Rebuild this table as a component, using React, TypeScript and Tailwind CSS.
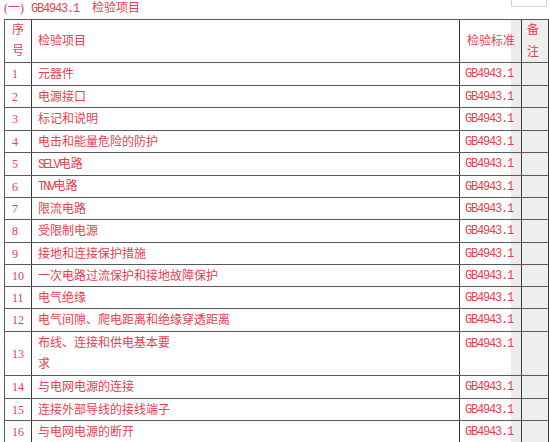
const RED = 'text-[#e8404f]'

type Row = { no: string; item: React.ReactNode; h: string; tall?: boolean }

const Mono = ({ children }: { children: React.ReactNode }) => (
  <span className="font-['Liberation_Mono',monospace] tracking-[-1.2px]">{children}</span>
)

const Narrow = ({ children }: { children: React.ReactNode }) => (
  <span className="font-['Liberation_Mono',monospace] tracking-[-2px]">{children}</span>
)

const rows: Row[] = [
  { no: '1', item: '元器件', h: 'h-[23px]' },
  { no: '2', item: '电源接口', h: 'h-[22px]' },
  { no: '3', item: '标记和说明', h: 'h-[23px]' },
  { no: '4', item: '电击和能量危险的防护', h: 'h-[22px]' },
  { no: '5', item: <><Narrow>SELV</Narrow>电路</>, h: 'h-[23px]' },
  { no: '6', item: <><Narrow>TNV</Narrow>电路</>, h: 'h-[22px]' },
  { no: '7', item: '限流电路', h: 'h-[22px]' },
  { no: '8', item: '受限制电源', h: 'h-[23px]' },
  { no: '9', item: '接地和连接保护措施', h: 'h-[22px]' },
  { no: '10', item: '一次电路过流保护和接地故障保护', h: 'h-[22px]' },
  { no: '11', item: '电气绝缘', h: 'h-[22px]' },
  { no: '12', item: '电气间隙、爬电距离和绝缘穿透距离', h: 'h-[23px]' },
  { no: '13', item: <>布线、连接和供电基本要<br />求</>, h: 'h-[44px]', tall: true },
  { no: '14', item: '与电网电源的连接', h: 'h-[23px]' },
  { no: '15', item: '连接外部导线的接线端子', h: 'h-[22px]' },
  { no: '16', item: '与电网电源的断开', h: 'h-[22px]' },
]

// gray strip at the right edge of the standard column
const stdBg = 'bg-[linear-gradient(to_right,transparent_51px,#ececec_51px)]'

export default function App() {
  return (
    <div className={`w-[549px] h-[442px] overflow-hidden bg-white text-[12px] font-['Liberation_Serif','Noto_Sans_CJK_SC',serif] ${RED}`}>
      <div className="flex h-[19px] items-start justify-between pr-[2px]">
        <div className="flex pl-[4px] leading-[16px]">
          <span>(一)</span>
          <span className="ml-[7px]"><Mono>GB4943.1</Mono></span>
          <span className="ml-[13px]">检验项目</span>
        </div>
        <div className="h-[7px] w-[36px] border border-t-0 border-[#d4d4d4] bg-white" />
      </div>

      <div className="ml-[4px] w-[545px] border-l border-t border-[#5a5a5a]">
        <div className="flex h-[43px] border-b border-[#5a5a5a]">
          <div className="flex w-[27px] shrink-0 flex-col items-center justify-center border-r border-[#3a3a3a] leading-[21px]">
            <span>序</span>
            <span>号</span>
          </div>
          <div className="flex w-[428px] shrink-0 items-center border-r border-[#3a3a3a] pl-[6px]">检验项目</div>
          <div className={`flex w-[62px] shrink-0 items-center border-r border-[#3a3a3a] pl-[7px] ${stdBg}`}>检验标准</div>
          <div className="flex w-[27px] shrink-0 flex-col items-center justify-center border-r border-[#3a3a3a] bg-[#efefef] pr-[4px] leading-[22px]">
            <span>备</span>
            <span>注</span>
          </div>
        </div>

        {rows.map((r) => (
          <div key={r.no} className={`flex ${r.h} border-b border-[#5a5a5a]`}>
            <div className="flex w-[27px] shrink-0 items-center border-r border-[#3a3a3a] pl-[7px]">{r.no}</div>
            <div
              className={`flex w-[428px] shrink-0 border-r border-[#3a3a3a] pl-[6px] ${
                r.tall ? 'items-start pt-[1px] leading-[21px]' : 'items-center'
              }`}
            >
              <span>{r.item}</span>
            </div>
            <div
              className={`flex w-[62px] shrink-0 border-r border-[#3a3a3a] pl-[5px] ${stdBg} ${
                r.tall ? 'items-start pt-[3px]' : 'items-center'
              }`}
            >
              <Mono>GB4943.1</Mono>
            </div>
            <div className="w-[27px] shrink-0 border-r border-[#3a3a3a] bg-[#efefef]" />
          </div>
        ))}
      </div>
    </div>
  )
}
